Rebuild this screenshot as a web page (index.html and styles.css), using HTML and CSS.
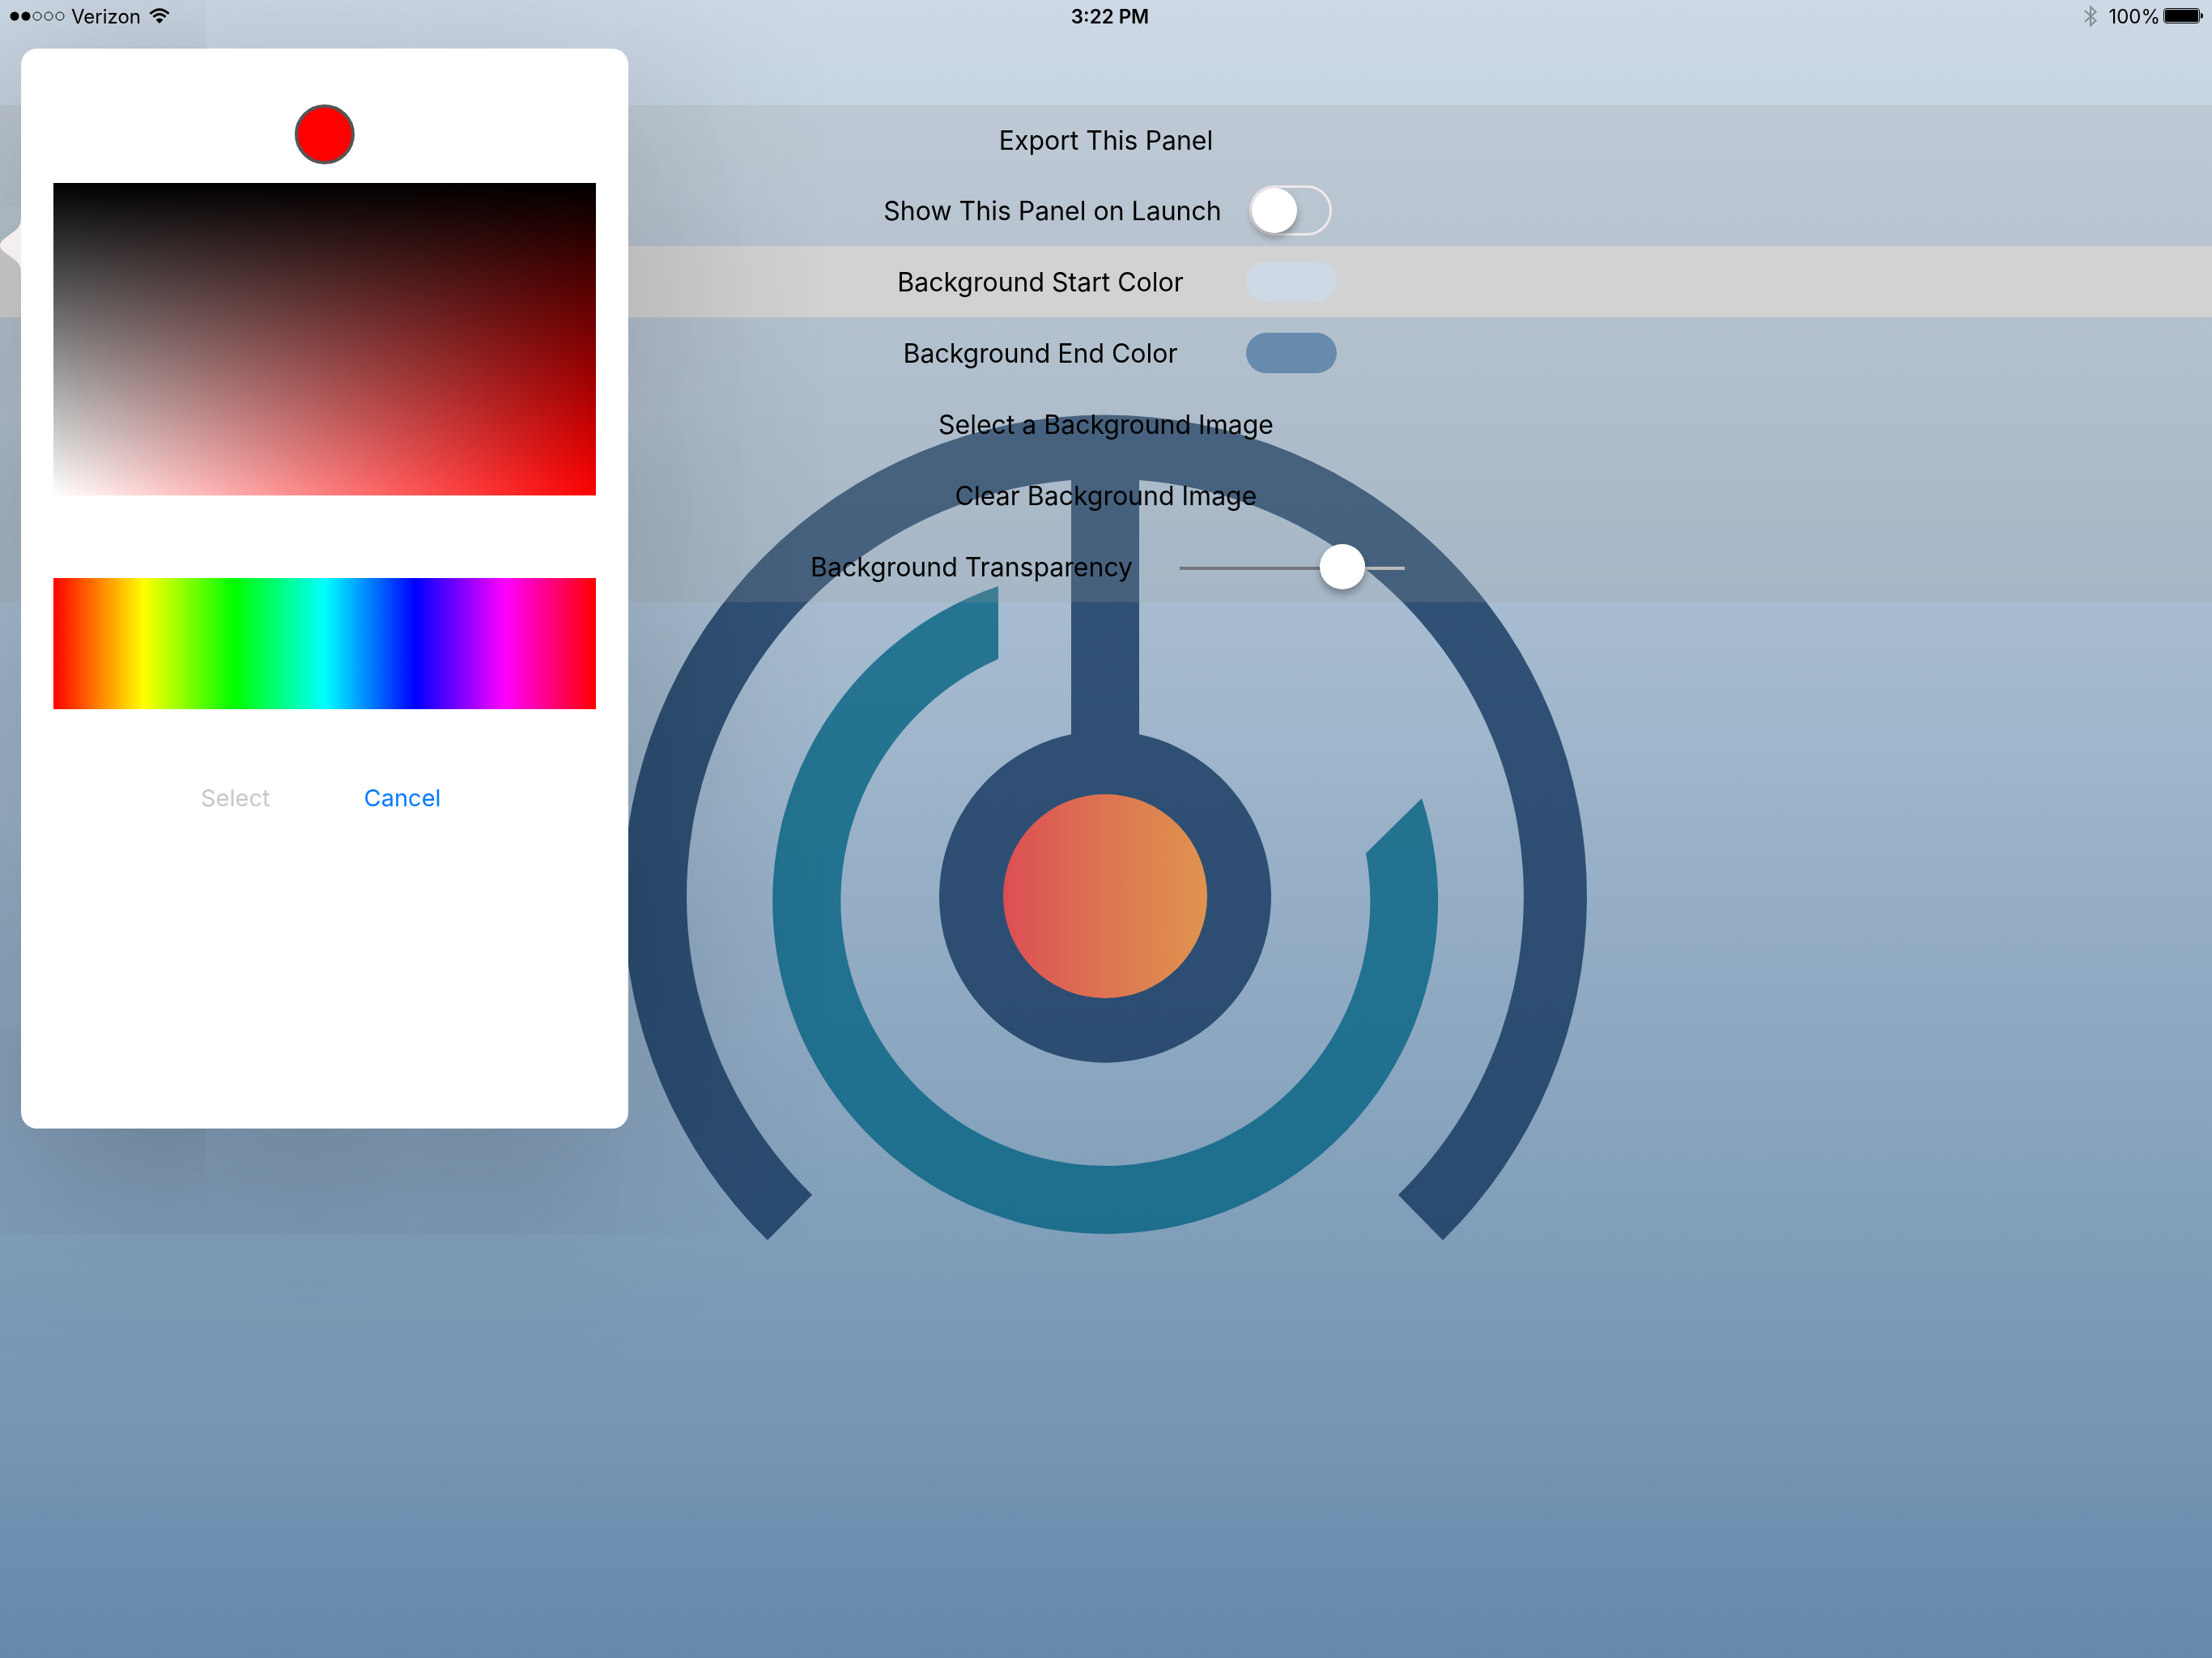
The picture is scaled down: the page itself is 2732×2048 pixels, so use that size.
FILE: index.html
```html
<!DOCTYPE html>
<html lang="en">
<head>
  <meta charset="UTF-8">
  <title>Panel Settings</title>
  <meta name="viewport" content="width=device-width, initial-scale=1.0">
  <link rel="stylesheet" href="styles.css">
</head>
<body>

  <!-- Panel background image -->
  <svg class="backdrop" viewBox="0 0 2732 2048" preserveAspectRatio="xMidYMid slice" aria-hidden="true">
    <defs>
      <linearGradient id="navy" gradientUnits="userSpaceOnUse" x1="0" y1="511" x2="0" y2="1531">
        <stop offset="0" stop-color="#315376"/>
        <stop offset="1" stop-color="#2a4b70"/>
      </linearGradient>
      <linearGradient id="teal" gradientUnits="userSpaceOnUse" x1="0" y1="723" x2="0" y2="1523">
        <stop offset="0" stop-color="#257592"/>
        <stop offset="1" stop-color="#1e6e8e"/>
      </linearGradient>
      <linearGradient id="core">
        <stop offset="0" stop-color="#dc4e54"/>
        <stop offset="0.5" stop-color="#dd7552"/>
        <stop offset="1" stop-color="#df944e"/>
      </linearGradient>
    </defs>
    <path fill="url(#navy)" d="M948 1532 A595 595 0 1 1 1782 1532 L1727 1476 A516 516 0 0 0 1407 593 V907 A205 205 0 1 1 1323 907 V593 A516 516 0 0 0 1003 1476 Z"/>
    <path fill="url(#teal)" d="M1233 724 A411 411 0 1 0 1756 986 L1687 1054 A327 327 0 1 1 1233 814 Z"/>
    <circle cx="1365" cy="1107" r="126" fill="url(#core)"/>
  </svg>

  <header class="status-bar">
    <div class="status-left">
      <svg width="68" height="12" viewBox="0 0 68 12" aria-hidden="true">
        <circle cx="6" cy="6" r="5.500"/>
        <circle cx="20" cy="6" r="5.500"/>
        <circle cx="34" cy="6" r="5" fill="none" stroke="#000"/>
        <circle cx="48" cy="6" r="5" fill="none" stroke="#000"/>
        <circle cx="62" cy="6" r="5" fill="none" stroke="#000"/>
      </svg>
      <span class="carrier">Verizon</span>
      <svg width="26" height="20" viewBox="0 0 26 20" aria-hidden="true">
        <path d="M1.500 7 Q13 -3.500 24.500 7" fill="none" stroke="#000" stroke-width="3"/>
        <path d="M5.500 11 Q13 4 20.500 11" fill="none" stroke="#000" stroke-width="3"/>
        <path d="M8.500 14.500 Q13 10.500 17.500 14.500 L13 19 Z"/>
      </svg>
    </div>
    <time class="clock">3:22 PM</time>
    <div class="status-right">
      <svg width="16" height="28" viewBox="0 0 16 28" aria-hidden="true">
        <path d="M1 7 L14.500 19.500 L8 25.500 V2.500 L14.500 8.500 L1 21" fill="none" stroke="#868c94" stroke-width="2"/>
      </svg>
      <span class="percent">100%</span>
      <svg width="50" height="20" viewBox="0 0 50 20" aria-hidden="true">
        <rect x="0.500" y="0.500" width="44" height="18" rx="3.500" fill="none" stroke="#000"/>
        <rect x="2" y="2" width="41" height="15" rx="2"/>
        <path d="M46 6 q3 0.500 3 3.500 t-3 3.500 z"/>
      </svg>
    </div>
  </header>

  <main class="settings">
    <button class="row" type="button">Export This Panel</button>
    <div class="row">
      <label class="launch-label" for="showOnLaunch">Show This Panel on Launch</label>
      <input type="checkbox" class="switch" id="showOnLaunch">
    </div>
    <div class="row selected">
      <label class="color-label" for="startColor">Background Start Color</label>
      <input type="color" class="swatch" id="startColor" value="#cdd9e5">
    </div>
    <div class="row">
      <label class="color-label" for="endColor">Background End Color</label>
      <input type="color" class="swatch" id="endColor" value="#678bac">
    </div>
    <button class="row" type="button">Select a Background Image</button>
    <button class="row" type="button">Clear Background Image</button>
    <div class="row">
      <label class="slider-label" for="transparency">Background Transparency</label>
      <input type="range" class="slider" id="transparency" min="0" max="100" value="78">
    </div>
  </main>

  <section class="popover" aria-label="Color picker">
    <svg class="popover-arrow" width="26" height="68" viewBox="0 0 26 68" aria-hidden="true">
      <path d="M26 0 C26 12 20 15 9 23 C-3 31 -3 37 9 45 C20 53 26 56 26 68 Z" fill="#f4eeef"/>
    </svg>
    <div class="preview"></div>
    <div class="shade"></div>
    <input type="range" class="hue" min="0" max="360" value="0" aria-label="Hue">
    <div class="actions">
      <button type="button" disabled>Select</button>
      <button type="button">Cancel</button>
    </div>
  </section>

</body>
</html>
```
FILE: styles.css
```css
:root {
  --start: #cdd9e5;
  --end: #668aab;
  --knob-shadow: 0 6px 10px rgba(0, 0, 0, 0.3);
}

* {
  box-sizing: border-box;
}

body {
  margin: 0;
  min-height: 100vh;
  font-family: Inter, "Liberation Sans", sans-serif;
  font-size: 32px;
  color: #000;
  background: linear-gradient(var(--start), var(--end)) no-repeat;
  overflow: hidden;
}

button,
input {
  margin: 0;
  padding: 0;
  border: none;
  background: none;
  font: inherit;
  color: inherit;
  appearance: none;
}

.backdrop {
  position: fixed;
  inset: 0;
  width: 100%;
  height: 100%;
  z-index: -1;
}

/* Status bar */
.status-bar {
  position: relative;
  z-index: 2;
  display: grid;
  grid-template-columns: 1fr auto 1fr;
  align-items: center;
  height: 40px;
  padding: 0 10px 0 12px;
  margin-bottom: 90px;
  font-size: 24px;
}

.status-left,
.status-right {
  display: flex;
  align-items: center;
}

.status-right {
  justify-content: flex-end;
}

.carrier {
  margin: 0 10px 0 8px;
}

.clock {
  padding-left: 8px;
  font-weight: 600;
}

.percent {
  margin: 0 4px 0 14px;
}

/* Settings list */
.settings {
  display: grid;
  grid-template-rows: 86px repeat(6, 88px);
  background: rgba(162, 160, 161, 0.2);
}

.row {
  display: flex;
  align-items: center;
  justify-content: center;
  width: 100%;
}

.row.selected {
  background: #d2d2d2;
}

.launch-label {
  margin: 0 34px 0 4px;
}

.color-label {
  width: 408px;
  margin-right: 50px;
  text-align: center;
}

.slider-label {
  margin: 0 58px 0 4px;
}

.switch {
  width: 102px;
  height: 62px;
  border: 3px solid #efe8ea;
  border-radius: 31px;
}

.switch::before {
  content: "";
  display: block;
  width: 56px;
  height: 56px;
  border-radius: 50%;
  background: #fff;
  box-shadow: var(--knob-shadow);
}

.switch:checked::before {
  margin-left: auto;
}

.swatch {
  width: 112px;
  height: 50px;
}

.swatch::-webkit-color-swatch-wrapper {
  padding: 0;
}

.swatch::-webkit-color-swatch {
  border: none;
  border-radius: 26px;
}

.slider {
  width: 278px;
  height: 56px;
  background: linear-gradient(to right, #75777a 72%, #bab8b9 72%) 0 28px / 100% 4px no-repeat;
}

.slider::-webkit-slider-thumb {
  appearance: none;
  width: 56px;
  height: 56px;
  border-radius: 50%;
  background: #fff;
  box-shadow: var(--knob-shadow);
}

/* Color picker popover */
.popover {
  position: absolute;
  top: 60px;
  left: 26px;
  z-index: 1;
  display: flex;
  flex-direction: column;
  align-items: center;
  width: 750px;
  height: 1334px;
  padding: 69px 40px;
  border-radius: 20px;
  background: #fff;
  box-shadow: 0 50px 400px rgba(0, 0, 0, 0.3);
}

.popover-arrow {
  position: absolute;
  top: 209px;
  left: -26px;
}

.preview {
  width: 74px;
  height: 74px;
  border: 4px solid #555;
  border-radius: 50%;
  background: #f00;
}

.shade {
  width: 100%;
  height: 386px;
  margin: 23px 0 102px;
  background: linear-gradient(to top, transparent, #000), linear-gradient(to right, #fff, #f00);
}

.hue {
  width: 100%;
  height: 162px;
  background: linear-gradient(to right, #f00, #ff0, #0f0, #0ff, #00f, #f0f, #f00);
}

.hue::-webkit-slider-thumb {
  appearance: none;
  width: 1px;
  height: 162px;
}

.actions {
  display: flex;
  gap: 116px;
  width: 100%;
  padding-left: 182px;
  margin-top: 92px;
  font-size: 29px;
  line-height: 36px;
}

.actions button {
  color: #007aff;
}

.actions button:disabled {
  color: #c8c8c8;
}
```
